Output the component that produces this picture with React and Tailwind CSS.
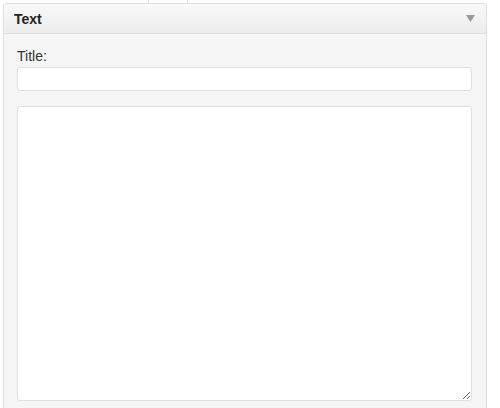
export default function App() {
  return (
    <div className="w-[500px] h-[408px] overflow-hidden bg-white font-['Liberation_Sans',Arial,sans-serif] text-[#333]">
      <div className="ml-[148px] w-[40px] h-[3px] border-x border-[#e3e3e3]" />
      <div className="ml-[3px] w-[484px] border border-[#dfdfdf] rounded-t-[3px] bg-[#f5f5f5]">
        <div className="h-[30px] flex items-center justify-between pl-[10px] pr-[11px] bg-gradient-to-b from-[#f9f9f9] to-[#ececec] border-b border-[#dfdfdf] rounded-t-[3px]">
          <h3 className="text-[14px] font-bold text-[#222] leading-none">Text</h3>
          <svg width="9" height="8" viewBox="0 0 9 8" className="mt-[1px]">
            <path d="M0 0 H9 L4.5 7 Z" fill="#999" />
          </svg>
        </div>
        <div className="px-[13px] pt-[14px] pb-[10px]">
          <label className="block text-[14px] leading-[16px] text-[#333]">Title:</label>
          <input
            type="text"
            className="mt-[3px] block w-[455px] h-[24px] bg-white border border-[#dfdfdf] rounded-[3px] px-[4px] text-[13px] outline-none"
          />
          <textarea
            className="mt-[15px] block w-[455px] h-[295px] bg-white border border-[#dfdfdf] rounded-[3px] p-[4px] text-[13px] outline-none resize-y"
          />
        </div>
      </div>
    </div>
  );
}
